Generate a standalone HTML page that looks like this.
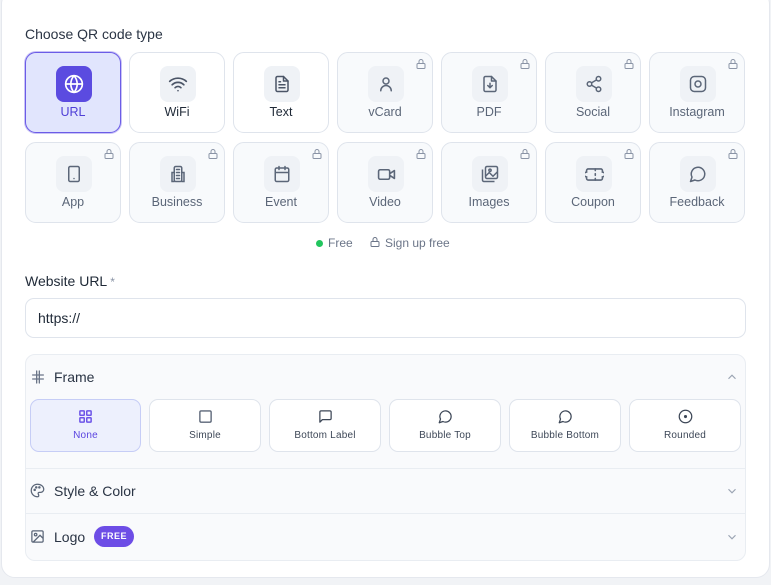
<!DOCTYPE html>
<html><head><meta charset="utf-8"><style>
*{box-sizing:border-box;margin:0;padding:0}
body{width:771px;height:585px;background:#f1f3f6;font-family:"Liberation Sans",sans-serif;position:relative;overflow:hidden;color:#1f2937}
.card{position:absolute;left:1px;top:-10px;width:769px;height:588px;background:#fff;border:1px solid #e5e8ee;border-radius:14px}
.abs{position:absolute}
.tile{position:absolute;width:96px;height:81px;border:1px solid #dfe4ec;border-radius:11px;background:#f8fafc}
.tile.w{background:#fff}
.tile .ib{position:absolute;left:30px;top:13px;width:36px;height:36px;border-radius:8px;background:#eff2f6;display:flex;align-items:center;justify-content:center}
.tile .lb{position:absolute;left:0;right:0;top:52px;text-align:center;font-size:12.5px;color:#5b6678}
.tile.w .lb{color:#1f2937}
.tile .lk{position:absolute;right:5px;top:5px}
.tile.sel{background:#e1e5fd;border:1.5px solid #6b5ce7;box-shadow:0 0 0 1px #c9c3f5}
.tile.sel .ib{background:#5b4be0}
.tile.sel .lb{color:#4f3fd6}
svg{display:block}
.opt{position:absolute;top:399px;width:112px;height:53px;border:1px solid #dfe4ec;border-radius:9px;background:#fff;font-size:10px;color:#3d4757;text-align:center}
.opt svg{margin:9px auto 0}
.opt span{display:block;margin-top:6px;letter-spacing:.2px}
</style></head><body>
<div class="card"></div>
<div class="abs" style="left:25px;top:26px;font-size:14px;color:#2a3444">Choose QR code type</div>

<div class="tile sel" style="left:25px;top:52px"><div class="ib"><svg width="20" height="20" viewBox="0 0 24 24" fill="none" stroke="#fff" stroke-width="2" stroke-linecap="round"><circle cx="12" cy="12" r="10"/><path d="M2 12h20M12 2a15 15 0 0 1 0 20M12 2a15 15 0 0 0 0 20"/></svg></div><div class="lb">URL</div></div>
<div class="tile w" style="left:129px;top:52px"><div class="ib"><svg width="20" height="20" viewBox="0 0 24 24" fill="none" stroke="#4b5567" stroke-width="2" stroke-linecap="round"><path d="M2 8.8a15 15 0 0 1 20 0M5 12.9a10 10 0 0 1 14 0M8.5 16.4a5 5 0 0 1 7 0M12 20h.01"/></svg></div><div class="lb">WiFi</div></div>
<div class="tile w" style="left:233px;top:52px"><div class="ib"><svg width="18" height="18" viewBox="0 0 24 24" fill="none" stroke="#4b5567" stroke-width="2" stroke-linecap="round" stroke-linejoin="round"><path d="M14 2H6a2 2 0 0 0-2 2v16a2 2 0 0 0 2 2h12a2 2 0 0 0 2-2V8z"/><path d="M14 2v6h6M8 13h8M8 17h8M8 9h2"/></svg></div><div class="lb">Text</div></div>
<div class="tile" style="left:337px;top:52px"><div class="ib"><svg width="18" height="18" viewBox="0 0 24 24" fill="none" stroke="#5b6678" stroke-width="2" stroke-linecap="round"><circle cx="12" cy="8" r="4"/><path d="M5 21a7 7 0 0 1 14 0"/></svg></div><div class="lb">vCard</div><svg class="lk" width="12" height="12" viewBox="0 0 24 24" fill="none" stroke="#8a94a6" stroke-width="2"><rect x="4" y="11" width="16" height="10" rx="2"/><path d="M8 11V7a4 4 0 0 1 8 0v4"/></svg></div>
<div class="tile" style="left:441px;top:52px"><div class="ib"><svg width="18" height="18" viewBox="0 0 24 24" fill="none" stroke="#5b6678" stroke-width="2" stroke-linecap="round" stroke-linejoin="round"><path d="M14 2H6a2 2 0 0 0-2 2v16a2 2 0 0 0 2 2h12a2 2 0 0 0 2-2V8z"/><path d="M14 2v6h6M12 11v6M9 14l3 3 3-3"/></svg></div><div class="lb">PDF</div><svg class="lk" width="12" height="12" viewBox="0 0 24 24" fill="none" stroke="#8a94a6" stroke-width="2"><rect x="4" y="11" width="16" height="10" rx="2"/><path d="M8 11V7a4 4 0 0 1 8 0v4"/></svg></div>
<div class="tile" style="left:545px;top:52px"><div class="ib"><svg width="18" height="18" viewBox="0 0 24 24" fill="none" stroke="#5b6678" stroke-width="2"><circle cx="18" cy="5" r="3"/><circle cx="6" cy="12" r="3"/><circle cx="18" cy="19" r="3"/><path d="M8.6 13.5l6.8 4M15.4 6.5l-6.8 4"/></svg></div><div class="lb">Social</div><svg class="lk" width="12" height="12" viewBox="0 0 24 24" fill="none" stroke="#8a94a6" stroke-width="2"><rect x="4" y="11" width="16" height="10" rx="2"/><path d="M8 11V7a4 4 0 0 1 8 0v4"/></svg></div>
<div class="tile" style="left:649px;top:52px"><div class="ib"><svg width="18" height="18" viewBox="0 0 24 24" fill="none" stroke="#5b6678" stroke-width="2"><rect x="2" y="2" width="20" height="20" rx="5"/><circle cx="12" cy="12" r="4"/><path d="M17.5 6.5h.01"/></svg></div><div class="lb">Instagram</div><svg class="lk" width="12" height="12" viewBox="0 0 24 24" fill="none" stroke="#8a94a6" stroke-width="2"><rect x="4" y="11" width="16" height="10" rx="2"/><path d="M8 11V7a4 4 0 0 1 8 0v4"/></svg></div>

<div class="tile" style="left:25px;top:142px"><div class="ib"><svg width="18" height="18" viewBox="0 0 24 24" fill="none" stroke="#5b6678" stroke-width="2" stroke-linecap="round"><rect x="5" y="2" width="14" height="20" rx="2"/><path d="M12 18h.01"/></svg></div><div class="lb">App</div><svg class="lk" width="12" height="12" viewBox="0 0 24 24" fill="none" stroke="#8a94a6" stroke-width="2"><rect x="4" y="11" width="16" height="10" rx="2"/><path d="M8 11V7a4 4 0 0 1 8 0v4"/></svg></div>
<div class="tile" style="left:129px;top:142px"><div class="ib"><svg width="18" height="18" viewBox="0 0 24 24" fill="none" stroke="#5b6678" stroke-width="2" stroke-linecap="round"><rect x="7" y="2" width="10" height="20" rx="2"/><path d="M7 10H4v12h3M17 10h3v12h-3M10 6h4M10 10h4M10 14h4M10 18h4"/></svg></div><div class="lb">Business</div><svg class="lk" width="12" height="12" viewBox="0 0 24 24" fill="none" stroke="#8a94a6" stroke-width="2"><rect x="4" y="11" width="16" height="10" rx="2"/><path d="M8 11V7a4 4 0 0 1 8 0v4"/></svg></div>
<div class="tile" style="left:233px;top:142px"><div class="ib"><svg width="18" height="18" viewBox="0 0 24 24" fill="none" stroke="#5b6678" stroke-width="2" stroke-linecap="round"><rect x="3" y="4" width="18" height="18" rx="2"/><path d="M16 2v4M8 2v4M3 10h18"/></svg></div><div class="lb">Event</div><svg class="lk" width="12" height="12" viewBox="0 0 24 24" fill="none" stroke="#8a94a6" stroke-width="2"><rect x="4" y="11" width="16" height="10" rx="2"/><path d="M8 11V7a4 4 0 0 1 8 0v4"/></svg></div>
<div class="tile" style="left:337px;top:142px"><div class="ib"><svg width="19" height="19" viewBox="0 0 24 24" fill="none" stroke="#5b6678" stroke-width="2" stroke-linejoin="round"><rect x="2" y="6" width="14" height="12" rx="2"/><path d="M16 13l6 4V7l-6 4"/></svg></div><div class="lb">Video</div><svg class="lk" width="12" height="12" viewBox="0 0 24 24" fill="none" stroke="#8a94a6" stroke-width="2"><rect x="4" y="11" width="16" height="10" rx="2"/><path d="M8 11V7a4 4 0 0 1 8 0v4"/></svg></div>
<div class="tile" style="left:441px;top:142px"><div class="ib"><svg width="18" height="18" viewBox="0 0 24 24" fill="none" stroke="#5b6678" stroke-width="2" stroke-linejoin="round"><rect x="6" y="2" width="16" height="16" rx="2"/><path d="M2 6v14a2 2 0 0 0 2 2h14M6 15l5-5 5 5 6-6"/><circle cx="12" cy="7" r="1.5"/></svg></div><div class="lb">Images</div><svg class="lk" width="12" height="12" viewBox="0 0 24 24" fill="none" stroke="#8a94a6" stroke-width="2"><rect x="4" y="11" width="16" height="10" rx="2"/><path d="M8 11V7a4 4 0 0 1 8 0v4"/></svg></div>
<div class="tile" style="left:545px;top:142px"><div class="ib"><svg width="19" height="19" viewBox="0 0 24 24" fill="none" stroke="#5b6678" stroke-width="2" stroke-linecap="round"><path d="M2 9a3 3 0 0 0 0 6v2a2 2 0 0 0 2 2h16a2 2 0 0 0 2-2v-2a3 3 0 0 0 0-6V7a2 2 0 0 0-2-2H4a2 2 0 0 0-2 2z"/><path d="M13 5v2M13 11v2M13 17v2"/></svg></div><div class="lb">Coupon</div><svg class="lk" width="12" height="12" viewBox="0 0 24 24" fill="none" stroke="#8a94a6" stroke-width="2"><rect x="4" y="11" width="16" height="10" rx="2"/><path d="M8 11V7a4 4 0 0 1 8 0v4"/></svg></div>
<div class="tile" style="left:649px;top:142px"><div class="ib"><svg width="18" height="18" viewBox="0 0 24 24" fill="none" stroke="#5b6678" stroke-width="2" stroke-linejoin="round"><path d="M7.9 20A9 9 0 1 0 4 16.1L2 22z"/></svg></div><div class="lb">Feedback</div><svg class="lk" width="12" height="12" viewBox="0 0 24 24" fill="none" stroke="#8a94a6" stroke-width="2"><rect x="4" y="11" width="16" height="10" rx="2"/><path d="M8 11V7a4 4 0 0 1 8 0v4"/></svg></div>

<div class="abs" style="left:316px;top:240px;width:7px;height:7px;border-radius:50%;background:#22c55e"></div>
<div class="abs" style="left:328px;top:236px;font-size:12px;color:#6b7588">Free</div>
<svg class="abs" style="left:369px;top:236px" width="12" height="12" viewBox="0 0 24 24" fill="none" stroke="#6b7588" stroke-width="2"><rect x="4" y="11" width="16" height="10" rx="2"/><path d="M8 11V7a4 4 0 0 1 8 0v4"/></svg>
<div class="abs" style="left:385px;top:236px;font-size:12px;color:#6b7588">Sign up free</div>

<div class="abs" style="left:25px;top:273px;font-size:14px;color:#1f2937">Website URL<span style="color:#8a94a6;font-size:12px;margin-left:3px">*</span></div>
<div class="abs" style="left:25px;top:298px;width:721px;height:40px;border:1px solid #dfe4ec;border-radius:9px;background:#fff;font-size:14px;padding:11px 12px;color:#1f2937">https://</div>

<div class="abs" style="left:25px;top:354px;width:721px;height:207px;border:1px solid #e9edf2;border-radius:10px;background:#f9fafc"></div>
<svg class="abs" style="left:30px;top:369px" width="16" height="16" viewBox="0 0 24 24" fill="none" stroke="#6b7588" stroke-width="2" stroke-linecap="round"><path d="M4 9h16M4 15h16M10 3v18M14 3v18"/></svg>
<div class="abs" style="left:54px;top:369px;font-size:14px;color:#2a3444">Frame</div>
<svg class="abs" style="left:725px;top:370px" width="14" height="14" viewBox="0 0 24 24" fill="none" stroke="#9aa3b2" stroke-width="2"><path d="M6 15l6-6 6 6"/></svg>

<div class="opt" style="left:30px;width:111px;background:#edf0fd;border-color:#c6cdf6;color:#5b45e0"><svg width="15" height="15" viewBox="0 0 24 24" fill="none" stroke="#6d55e8" stroke-width="2.4"><rect x="3" y="3" width="7" height="7" rx="1"/><rect x="14" y="3" width="7" height="7" rx="1"/><rect x="3" y="14" width="7" height="7" rx="1"/><rect x="14" y="14" width="7" height="7" rx="1"/></svg><span>None</span></div>
<div class="opt" style="left:149px"><svg width="15" height="15" viewBox="0 0 24 24" fill="none" stroke="#5b6678" stroke-width="2.2"><rect x="3" y="3" width="18" height="18" rx="2"/></svg><span>Simple</span></div>
<div class="opt" style="left:269px"><svg width="15" height="15" viewBox="0 0 24 24" fill="none" stroke="#3d4757" stroke-width="2" stroke-linejoin="round"><path d="M21 15a2 2 0 0 1-2 2H7l-4 4V5a2 2 0 0 1 2-2h14a2 2 0 0 1 2 2z"/></svg><span>Bottom Label</span></div>
<div class="opt" style="left:389px"><svg width="15" height="15" viewBox="0 0 24 24" fill="none" stroke="#3d4757" stroke-width="2" stroke-linejoin="round"><path d="M7.9 20A9 9 0 1 0 4 16.1L2 22z"/></svg><span>Bubble Top</span></div>
<div class="opt" style="left:509px"><svg width="15" height="15" viewBox="0 0 24 24" fill="none" stroke="#3d4757" stroke-width="2" stroke-linejoin="round"><path d="M7.9 20A9 9 0 1 0 4 16.1L2 22z"/></svg><span>Bubble Bottom</span></div>
<div class="opt" style="left:629px"><svg width="15" height="15" viewBox="0 0 24 24" fill="none" stroke="#3d4757" stroke-width="2"><circle cx="12" cy="12" r="10"/><circle cx="12" cy="12" r="1.5" fill="#3d4757"/></svg><span>Rounded</span></div>

<div class="abs" style="left:26px;top:468px;width:719px;height:1px;background:#e9edf2"></div>
<svg class="abs" style="left:30px;top:483px" width="15" height="15" viewBox="0 0 24 24" fill="none" stroke="#5b6678" stroke-width="2"><path d="M12 2a10 10 0 0 0 0 20c1.5 0 2-1 2-2 0-1.5-1-2-1-3a2 2 0 0 1 2-2h2a5 5 0 0 0 5-5c0-4.5-4.5-8-10-8z"/><circle cx="7.5" cy="11" r="1"/><circle cx="10" cy="7" r="1"/><circle cx="15" cy="7" r="1"/></svg>
<div class="abs" style="left:54px;top:483px;font-size:14px;color:#2a3444">Style &amp; Color</div>
<svg class="abs" style="left:725px;top:484px" width="14" height="14" viewBox="0 0 24 24" fill="none" stroke="#9aa3b2" stroke-width="2"><path d="M6 9l6 6 6-6"/></svg>
<div class="abs" style="left:26px;top:513px;width:719px;height:1px;background:#e9edf2"></div>
<svg class="abs" style="left:30px;top:529px" width="15" height="15" viewBox="0 0 24 24" fill="none" stroke="#5b6678" stroke-width="2"><rect x="3" y="3" width="18" height="18" rx="2"/><circle cx="9" cy="9" r="2"/><path d="M21 15l-5-5L5 21"/></svg>
<div class="abs" style="left:54px;top:529px;font-size:14px;color:#2a3444">Logo</div>
<div class="abs" style="left:94px;top:526px;width:40px;height:21px;border-radius:11px;background:#6d4de6;color:#fff;font-size:9px;font-weight:bold;text-align:center;line-height:21px;letter-spacing:.5px">FREE</div>
<svg class="abs" style="left:725px;top:530px" width="14" height="14" viewBox="0 0 24 24" fill="none" stroke="#9aa3b2" stroke-width="2"><path d="M6 9l6 6 6-6"/></svg>
</body></html>
